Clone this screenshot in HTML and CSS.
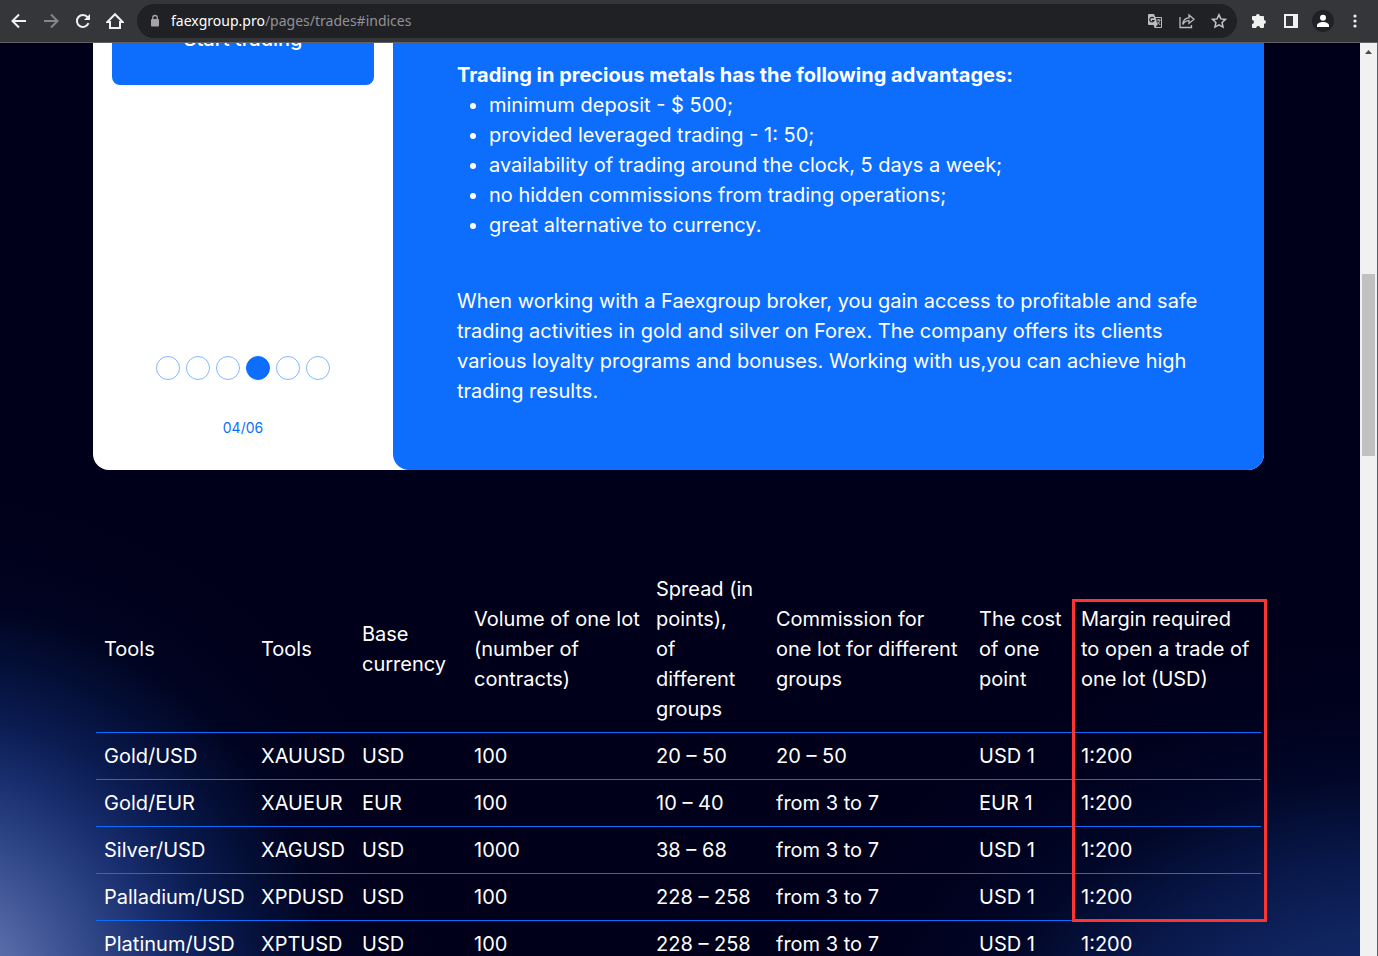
FILE: index.html
```html
<!DOCTYPE html>
<html lang="en">
<head>
<meta charset="utf-8">
<title>Faexgroup trades</title>
<link rel="stylesheet" href="styles.css">
</head>
<body>
<header class="toolbar">
  <nav class="nav">
    <button class="icon-btn" aria-label="Back"><svg width="16" height="16" viewBox="0 0 16 16" fill="none" stroke="#f1f1f2" stroke-width="2"><path d="M15 8H2M8 1.5 1.5 8 8 14.5"/></svg></button>
    <button class="icon-btn" aria-label="Forward"><svg width="16" height="16" viewBox="0 0 16 16" fill="none" stroke="#85868a" stroke-width="2"><path d="M1 8h13M8 1.5 14.5 8 8 14.5"/></svg></button>
    <button class="icon-btn" aria-label="Reload"><svg width="16" height="16" viewBox="0 0 16 16"><path d="M13.500 10.200A6 6 0 1 1 12.600 4.200" fill="none" stroke="#f1f1f2" stroke-width="2"/><path d="M15 1v6H9z" fill="#f1f1f2"/></svg></button>
    <button class="icon-btn" aria-label="Home"><svg width="18" height="18" viewBox="0 0 18 18" fill="none" stroke="#f1f1f2" stroke-width="2"><path d="M1.500 9.900H4V16h10V9.900h2.500L9 2.200z"/></svg></button>
  </nav>
  <div class="omnibox">
    <svg width="10" height="14" viewBox="0 0 10 14"><rect x="1" y="5" width="8" height="7.500" rx="1" fill="#a5a1a7"/><path d="M2.700 5V3.800a2.300 2.300 0 0 1 4.600 0V5" fill="none" stroke="#a5a1a7" stroke-width="1.300"/></svg>
    <a class="url" href="#indices"><span class="host">faexgroup.pro</span>/pages/trades#indices</a>
    <div class="actions">
      <button class="icon-btn" aria-label="Translate"><svg width="16" height="16" viewBox="0 0 16 16"><path d="M2 1h5l1.300 3H14a1 1 0 0 1 1 1v9a1 1 0 0 1-1 1H7.500L6.500 12H2a1 1 0 0 1-1-1V2a1 1 0 0 1 1-1z" fill="#bcbcbf"/><path d="M8.700 5H14v9H8.500l2-2z" fill="#202124"/><path d="M6.700 5.200A2.200 2.200 0 1 0 7 7.500H5" fill="none" stroke="#202124" stroke-width="1.200"/><path d="M9.500 7h4M11.500 6v1M12.800 7c-.3 2-1.500 3.500-3 4.500M10.200 8.500l3 3.500" fill="none" stroke="#bcbcbf"/></svg></button>
      <button class="icon-btn" aria-label="Share"><svg width="16" height="16" viewBox="0 0 16 16" fill="none" stroke="#bcbcbf" stroke-width="1.300"><path d="M1 4v10.500h11.500V12"/><path d="M3.800 11.500C4 7 6.500 5 10 4.800V2l5 4.200-5 4.200V7.700C7 7.700 5.200 9 3.800 11.500z"/></svg></button>
      <button class="icon-btn" aria-label="Bookmark"><svg width="16" height="16" viewBox="0 0 16 16" fill="none" stroke="#c4c4c7" stroke-width="1.500"><path d="m8 1.700 1.900 4.200 4.600.5-3.400 3.100.9 4.600L8 11.800l-4 2.300.9-4.600L1.500 6.400l4.600-.5z"/></svg></button>
    </div>
  </div>
  <div class="tools">
    <button class="icon-btn" aria-label="Extensions"><svg width="16" height="16" viewBox="0 0 16 16" fill="#f1f1f2"><path d="M5 3a1.900 1.900 0 0 1 3.800 0H12a1 1 0 0 1 1 1v3a1.900 1.900 0 0 1 0 3.800V14a1 1 0 0 1-1 1H9.200a2 2 0 0 0-4 0H2a1 1 0 0 1-1-1v-3a2 2 0 0 0 0-4V4a1 1 0 0 1 1-1z"/></svg></button>
    <button class="icon-btn" aria-label="Side panel"><svg width="16" height="16" viewBox="0 0 16 16"><path d="M1 1h14v14H1zM3 3v10h7V3z" fill="#f1f1f2" fill-rule="evenodd"/></svg></button>
    <button class="icon-btn" aria-label="Profile"><svg width="22" height="22" viewBox="0 0 22 22"><circle cx="11" cy="11" r="11" fill="#202124"/><circle cx="11" cy="7.800" r="3" fill="#fff"/><path d="M5 17v-1.500c0-2.200 3-3.500 6-3.500s6 1.300 6 3.500V17z" fill="#fff"/></svg></button>
    <button class="icon-btn" aria-label="Menu"><svg width="16" height="16" viewBox="0 0 16 16" fill="#f1f1f2"><circle cx="8" cy="3" r="1.600"/><circle cx="8" cy="8" r="1.600"/><circle cx="8" cy="13" r="1.600"/></svg></button>
  </div>
</header>
<div class="viewport">
  <main class="page">
    <section class="card">
      <aside class="side">
        <button class="start">Start trading</button>
        <div class="pager">
          <div class="dots">
            <button class="dot" aria-label="Slide 1"></button>
            <button class="dot" aria-label="Slide 2"></button>
            <button class="dot" aria-label="Slide 3"></button>
            <button class="dot dot-active" aria-label="Slide 4"></button>
            <button class="dot" aria-label="Slide 5"></button>
            <button class="dot" aria-label="Slide 6"></button>
          </div>
          <span class="count">04/06</span>
        </div>
      </aside>
      <article class="panel">
        <strong>Trading in precious metals has the following advantages:</strong>
        <ul class="list">
          <li>minimum deposit - $ 500;</li>
          <li>provided leveraged trading - 1: 50;</li>
          <li>availability of trading around the clock, 5 days a week;</li>
          <li>no hidden commissions from trading operations;</li>
          <li>great alternative to currency.</li>
        </ul>
        <p class="text">When working with a Faexgroup broker, you gain access to profitable and safe trading activities in gold and silver on Forex. The company offers its clients various loyalty programs and bonuses. Working with us,you can achieve high trading results.</p>
      </article>
    </section>
    <section class="rates">
      <table class="table">
        <colgroup><col class="c-name"><col class="c-code"><col class="c-base"><col class="c-volume"><col class="c-spread"><col class="c-fee"><col class="c-point"><col class="c-margin"></colgroup>
        <thead>
          <tr><th>Tools</th><th>Tools</th><th>Base currency</th><th>Volume of one lot (number of contracts)</th><th>Spread (in points),<br>of different groups</th><th>Commission for<br>one lot for different groups</th><th>The cost of one point</th><th class="marked">Margin required to open a trade of one lot (USD)<span class="marker"></span></th></tr>
        </thead>
        <tbody>
          <tr><td>Gold/USD</td><td>XAUUSD</td><td>USD</td><td>100</td><td>20 – 50</td><td>20 – 50</td><td>USD 1</td><td>1:200</td></tr>
          <tr><td>Gold/EUR</td><td>XAUEUR</td><td>EUR</td><td>100</td><td>10 – 40</td><td>from 3 to 7</td><td>EUR 1</td><td>1:200</td></tr>
          <tr><td>Silver/USD</td><td>XAGUSD</td><td>USD</td><td>1000</td><td>38 – 68</td><td>from 3 to 7</td><td>USD 1</td><td>1:200</td></tr>
          <tr><td>Palladium/USD</td><td>XPDUSD</td><td>USD</td><td>100</td><td>228 – 258</td><td>from 3 to 7</td><td>USD 1</td><td>1:200</td></tr>
          <tr><td>Platinum/USD</td><td>XPTUSD</td><td>USD</td><td>100</td><td>228 – 258</td><td>from 3 to 7</td><td>USD 1</td><td>1:200</td></tr>
        </tbody>
      </table>
    </section>
  </main>
  <div class="scrollbar">
    <svg class="arrow" width="17" height="17" viewBox="0 0 17 17"><path d="M5 11 8.500 7l3.500 4z" fill="#504846"/></svg>
    <div class="thumb"></div>
  </div>
</div>
</body>
</html>
```
FILE: styles.css
```css
* { box-sizing: border-box; }

body {
  margin: 0;
  height: 100vh;
  display: flex;
  flex-direction: column;
  overflow: hidden;
  font: 400 20px/30px Inter, "Liberation Sans", sans-serif;
  color: #fff;
}

button {
  border: 0;
  padding: 0;
  background: none;
  color: inherit;
  font: inherit;
}

/* Browser toolbar */
.toolbar {
  flex: none;
  display: flex;
  align-items: center;
  height: 43px;
  padding: 0 15px 0 11px;
  background: #35363a;
  border-bottom: 1px solid #606164;
}
.nav, .actions, .tools { display: flex; align-items: center; }
.nav { gap: 16px; }
.actions { gap: 16px; }
.tools { gap: 16px; margin-left: 14px; }
.icon-btn {
  display: flex;
  align-items: center;
  justify-content: center;
  width: 16px;
  height: 24px;
}
.icon-btn svg { flex: none; }
.omnibox {
  flex: 1;
  display: flex;
  align-items: center;
  height: 34px;
  margin-left: 14px;
  padding: 0 10px 0 13px;
  border-radius: 17px;
  background: #202124;
}
.url {
  flex: 1;
  margin-left: 11px;
  font: 14px/20px "Noto Sans", "Open Sans", sans-serif;
  color: #929196;
  text-decoration: none;
}
.host { color: #fff; }

/* Page area and scrollbar */
.viewport { flex: 1; min-height: 0; display: flex; border-right: 1px solid #606164; }
.page {
  flex: 1;
  min-width: 0;
  overflow: hidden;
  padding: 0 96px 0 93px;
  background:
    radial-gradient(circle at -70px 957px, #7486bd 0, #5a6dab 80px, #465a9a 125px, #2c4384 180px, #182d6d 235px, #0a1b50 290px, #040f37 345px, rgba(1, 6, 36, .6) 400px, rgba(0, 2, 30, .3) 460px, rgba(0, 0, 27, 0) 540px),
    radial-gradient(ellipse 640px 440px at 1400px 1020px, #173078 0, #10245f 30%, #081748 48%, rgba(2, 9, 44, .8) 65%, rgba(0, 3, 32, .4) 82%, rgba(0, 0, 27, 0) 100%),
    #00001b;
}
.scrollbar { flex: none; width: 17px; padding-right: 2px; padding-left: 2px; background: #f1f1f1; }
.arrow { display: block; margin-left: -2px; }
.thumb { height: 182px; margin-top: 214px; background: #c1c1c1; }

/* Instrument card, scrolled partly under the toolbar */
.card {
  display: flex;
  margin-top: -50px;
  border-radius: 16px;
  background: #fff;
}
.side {
  flex: none;
  width: 300px;
  padding: 0 19px 27px;
  display: flex;
  flex-direction: column;
  justify-content: space-between;
}
.start {
  height: 92px;
  border-radius: 8px;
  background: #0d6efd;
  font-weight: 500;
  text-align: center;
}
.pager { display: flex; flex-direction: column; align-items: center; gap: 33px; }
.dots { display: flex; gap: 6px; }
.dot {
  width: 24px;
  height: 24px;
  border: 1px solid #86b7fe;
  border-radius: 50%;
}
.dot-active { background: #0d6efd; border-color: #0d6efd; }
.count { color: #0d6efd; font-size: 14px; }
.panel {
  flex: 1;
  padding: 67px 64px 64px;
  border-radius: 16px;
  background: #0d6efd;
}
.list { margin: 0 0 46px; padding-left: 32px; }
.text { margin: 0; }

/* Rates table */
.rates { padding: 96px 3px 0; }
.table { width: 100%; table-layout: fixed; border-collapse: collapse; }
.table th, .table td {
  padding: 8px;
  border-bottom: 1px solid #0d6efd;
  text-align: left;
  font-weight: 400;
}
.c-name { width: 157px; }
.c-code { width: 101px; }
.c-base { width: 112px; }
.c-volume { width: 182px; }
.c-spread { width: 120px; }
.c-fee { width: 203px; }
.c-point { width: 102px; }
.c-margin { width: 188px; }
.table .marked { position: relative; }
.marker {
  position: absolute;
  top: 33px;
  left: -1px;
  right: -6px;
  height: 323px;
  border: 3px solid #fb3434;
}
```
